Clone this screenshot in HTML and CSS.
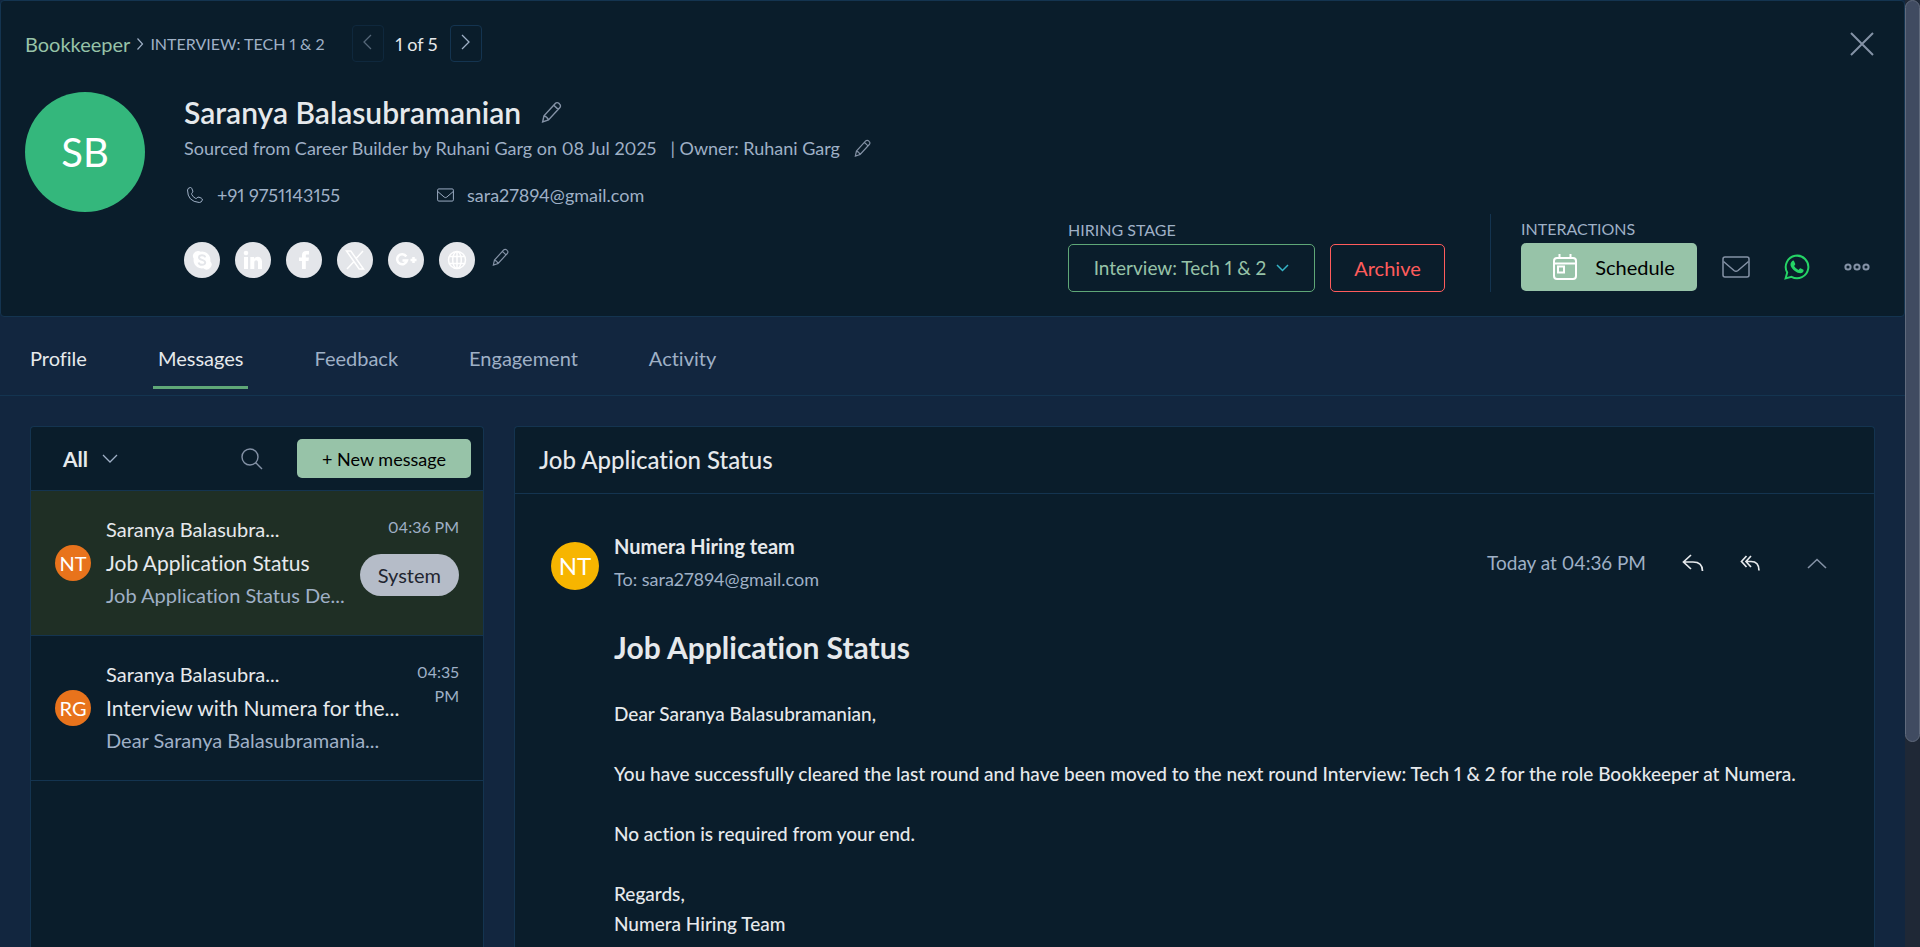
FILE: index.html
```html
<!DOCTYPE html>
<html lang="en">
<head>
    <meta charset="UTF-8">
    <meta name="viewport" content="width=device-width, initial-scale=1.0">
    <title>Saranya Balasubramanian - Messages</title>
    <link rel="stylesheet" href="styles.css">
</head>
<body>
    <!-- shared icons -->
    <svg class="sprite" aria-hidden="true">
        <symbol id="pencil" viewBox="0 0 20 20">
            <path d="M1.500 19l1.200-5.500L13 2.200a2.200 2.200 0 0 1 3.200-.1l.8.800a2.200 2.200 0 0 1 0 3.200L6.800 17.200zM11.600 3.800l4 3.800M2.700 13.500q2.800.6 4.100 3.700"/>
        </symbol>
        <symbol id="envelope" viewBox="0 0 28 22">
            <rect x="1" y="1" width="26" height="20" rx="2"/>
            <path d="M1.500 5.500L12 14.500q2 1.500 4 0L26.500 5.500"/>
        </symbol>
    </svg>

    <div class="page">
        <div class="content">
            <header class="candidate">
                <div class="topbar">
                    <nav class="breadcrumb">
                        <a href="#">Bookkeeper</a>
                        <svg class="icon" width="8" height="14" viewBox="0 0 8 14" stroke-width="1.200"><path d="M1.500 1.500L6.500 7l-5 5.500"/></svg>
                        <span class="caps">INTERVIEW: TECH 1 &amp; 2</span>
                    </nav>
                    <div class="pager">
                        <button class="pager-btn" disabled aria-label="Previous"><svg class="icon" width="9" height="16" viewBox="0 0 9 16" stroke-width="1.300"><path d="M8 1L1 8l7 7"/></svg></button>
                        <span>1 of 5</span>
                        <button class="pager-btn" aria-label="Next"><svg class="icon" width="9" height="16" viewBox="0 0 9 16" stroke-width="1.300"><path d="M1 1l7 7-7 7"/></svg></button>
                    </div>
                    <button class="icon-btn close" aria-label="Close"><svg class="icon" width="24" height="24" viewBox="0 0 24 24" stroke-width="2"><path d="M1 1l22 22M23 1L1 23"/></svg></button>
                </div>

                <div class="candidate-row">
                    <div class="avatar avatar-lg">SB</div>
                    <div class="candidate-info">
                        <div class="name-row">
                            <h1>Saranya Balasubramanian</h1>
                            <button class="icon-btn" aria-label="Edit name"><svg class="icon" width="22" height="22" stroke-width="1.300"><use href="#pencil"/></svg></button>
                        </div>
                        <div class="source-row">
                            <span>Sourced from Career Builder by Ruhani Garg on 08 Jul 2025</span>
                            <span class="owner">| Owner: Ruhani Garg</span>
                            <button class="icon-btn" aria-label="Edit owner"><svg class="icon" width="18" height="18" stroke-width="1.300"><use href="#pencil"/></svg></button>
                        </div>
                        <div class="contact-row">
                            <span class="phone"><svg class="icon" width="18" height="18" viewBox="0 0 18 18"><path d="M1.500 4Q2 1.500 4.500 1.500q1 0 1.400 1.200L6.800 5q.3 1-.6 1.800-1 .8-.4 1.800 1.200 2.400 3.600 3.700 1 .5 1.700-.5.800-1 1.900-.6l2.400 1q1.300.6.900 1.900-.7 2.400-3 2.400Q1.500 15.500 1.500 4z"/></svg>+91 9751143155</span>
                            <span class="email"><svg class="icon" width="17" height="14" stroke-width="1.600"><use href="#envelope"/></svg>sara27894@gmail.com</span>
                        </div>
                        <div class="social-row">
                            <a class="social" href="#" aria-label="Skype"><svg width="20" height="20" viewBox="0 0 20 20"><path fill="#fff" d="M5.800 1a4.800 4.800 0 0 1 3 .7A8.300 8.300 0 0 1 18.300 11.200 5 5 0 0 1 11.300 18.300 8.300 8.300 0 0 1 1.700 8.700 5 5 0 0 1 5.800 1z"/><path class="skype-s" d="M13.200 7.400C12.700 4.400 7 4.500 7 7.500c0 3 6.200 1.800 6.200 5 0 3.200-6 3-6.600 0"/></svg></a>
                            <a class="social" href="#" aria-label="LinkedIn"><svg width="20" height="20" viewBox="0 0 20 20" fill="#fff"><circle cx="3" cy="3" r="2.300"/><path d="M1 7h4v12H1zM7.300 7h3.900v1.700c2-3.200 7.800-2.600 7.800 2.800V19h-4v-6.500c0-3-3.700-2.800-3.700 0V19h-4z"/></svg></a>
                            <a class="social" href="#" aria-label="Facebook"><svg width="20" height="20" viewBox="0 0 20 20" fill="#fff"><path d="M8 19v-8H5V7.500h3V5.200C8 2.200 9.800 1 12 1h3v3.500h-1.800c-1 0-1.400.5-1.400 1.400v1.600H15l-.5 3.500h-2.700v8z"/></svg></a>
                            <a class="social" href="#" aria-label="X"><svg width="20" height="20" viewBox="0 0 20 20" fill="none" stroke="#fff" stroke-width="1.500"><path d="M1.500 1h4.300l12.700 18h-4.300zM18 1l-7.300 8M9 11.500L2 19"/></svg></a>
                            <a class="social" href="#" aria-label="Google Plus"><svg width="22" height="20" viewBox="0 0 22 20" fill="none" stroke="#fff" stroke-width="2.500"><path d="M11.300 6.500A5 5 0 1 0 12 10.500H7.500M18.500 7v6M15.500 10h6"/></svg></a>
                            <a class="social" href="#" aria-label="Website"><svg width="20" height="20" viewBox="0 0 20 20" fill="none" stroke="#fff" stroke-width="1.500"><circle cx="10" cy="10" r="8.500"/><ellipse cx="10" cy="10" rx="4.300" ry="8.500"/><path d="M10 1.500v17M2.500 6.500h15M2.500 13.500h15"/></svg></a>
                            <button class="icon-btn" aria-label="Edit links"><svg class="icon" width="18" height="18" stroke-width="1.300"><use href="#pencil"/></svg></button>
                        </div>
                    </div>

                    <div class="actions">
                        <div class="stage">
                            <div class="caps">HIRING STAGE</div>
                            <div class="stage-buttons">
                                <button class="btn btn-stage">Interview: Tech 1 &amp; 2
                                    <svg class="icon" width="13" height="8" viewBox="0 0 13 8" stroke-width="1.500"><path d="M1 1l5.500 5.500L12 1"/></svg>
                                </button>
                                <button class="btn btn-archive">Archive</button>
                            </div>
                        </div>
                        <div class="interactions">
                            <div class="caps">INTERACTIONS</div>
                            <div class="interaction-buttons">
                                <button class="btn btn-schedule">
                                    <svg width="24" height="26" viewBox="0 0 24 26" fill="none" stroke="#fff" stroke-width="2"><rect x="1" y="4" width="22" height="21" rx="3"/><path d="M1 9.500h22M6.500 0v4M17.500 0v4"/><rect x="5" y="12.500" width="6" height="6"/></svg>
                                    Schedule
                                </button>
                                <button class="icon-btn" aria-label="Email"><svg class="icon" width="28" height="22" stroke-width="1.500"><use href="#envelope"/></svg></button>
                                <button class="icon-btn" aria-label="WhatsApp"><svg width="26" height="26" viewBox="0 0 26 26"><path fill="none" stroke="#25d366" stroke-width="2" d="M1.600 24.400l1.600-5.900a11.300 11.300 0 1 1 4.300 4.300z"/><path fill="#25d366" d="M8 7.200q.8-.9 1.900-.4l1.400 3.100q.2.600-1.200 2 1.500 2.900 4.400 4 1.400-1.900 2-1.600l3 1.400q.5 1-.6 2.600c-2 1.900-4.800 1.100-8-1.200-3.600-2.700-6.200-7-2.900-9.900z"/></svg></button>
                                <button class="icon-btn" aria-label="More"><svg class="icon" width="26" height="8" viewBox="0 0 26 8" stroke-width="2"><circle cx="4" cy="4" r="2.600"/><circle cx="13" cy="4" r="2.600"/><circle cx="22" cy="4" r="2.600"/></svg></button>
                            </div>
                        </div>
                    </div>
                </div>
            </header>

            <nav class="tabs">
                <a href="#" class="tab visited">Profile</a>
                <a href="#" class="tab active">Messages</a>
                <a href="#" class="tab">Feedback</a>
                <a href="#" class="tab">Engagement</a>
                <a href="#" class="tab">Activity</a>
            </nav>

            <main class="messages">
                <section class="panel inbox">
                    <div class="inbox-head">
                        <button class="filter">All
                            <svg class="icon" width="16" height="10" viewBox="0 0 16 10" stroke-width="1.300"><path d="M1 1l7 7 7-7"/></svg>
                        </button>
                        <button class="icon-btn search" aria-label="Search"><svg class="icon" width="22" height="22" viewBox="0 0 22 22" stroke-width="1.400"><circle cx="9" cy="9" r="8"/><path d="M14.800 14.800L21 21"/></svg></button>
                        <button class="btn btn-new">+ New message</button>
                    </div>
                    <article class="mail selected">
                        <div class="avatar avatar-sm">NT</div>
                        <div class="mail-text">
                            <div class="mail-from">Saranya Balasubra...</div>
                            <div class="mail-subject">Job Application Status</div>
                            <div class="mail-preview">Job Application Status De...</div>
                        </div>
                        <div class="mail-meta">
                            <time>04:36 PM</time>
                            <span class="tag">System</span>
                        </div>
                    </article>
                    <article class="mail">
                        <div class="avatar avatar-sm">RG</div>
                        <div class="mail-text">
                            <div class="mail-from">Saranya Balasubra...</div>
                            <div class="mail-subject">Interview with Numera for the...</div>
                            <div class="mail-preview">Dear Saranya Balasubramania...</div>
                        </div>
                        <div class="mail-meta">
                            <time>04:35<br>PM</time>
                        </div>
                    </article>
                </section>

                <section class="panel reader">
                    <h2 class="reader-title">Job Application Status</h2>
                    <div class="reader-head">
                        <div class="avatar avatar-md">NT</div>
                        <div class="sender">
                            <div class="sender-name">Numera Hiring team</div>
                            <div class="sender-to">To: sara27894@gmail.com</div>
                        </div>
                        <div class="reader-actions">
                            <time>Today at 04:36 PM</time>
                            <button class="icon-btn light" aria-label="Reply"><svg class="icon" width="22" height="18" viewBox="0 0 22 18" stroke-width="1.700"><path d="M9 1L1.500 8 9 15M2 8h9q9.500 0 9.500 9"/></svg></button>
                            <button class="icon-btn light" aria-label="Reply all"><svg class="icon" width="20" height="16" viewBox="0 0 20 16" stroke-width="1.700"><path d="M6.500 1L1.500 6.500l5 5.500M11 1L6 6.500l5 5.500M6.500 6.500H11q8 0 8 9"/></svg></button>
                            <button class="icon-btn" aria-label="Collapse"><svg class="icon" width="20" height="11" viewBox="0 0 20 11" stroke-width="1.600"><path d="M1 10l9-8.500L19 10"/></svg></button>
                        </div>
                    </div>
                    <div class="letter">
                        <h3>Job Application Status</h3>
                        <p>Dear Saranya Balasubramanian,</p>
                        <p>You have successfully cleared the last round and have been moved to the next round Interview: Tech 1 &amp; 2 for the role Bookkeeper at Numera.</p>
                        <p>No action is required from your end.</p>
                        <p>Regards,<br>Numera Hiring Team</p>
                    </div>
                </section>
            </main>
        </div>
        <div class="scrollbar"><div class="thumb"></div></div>
    </div>
</body>
</html>
```
FILE: styles.css
```css
* {
    box-sizing: border-box;
}
body {
    margin: 0;
    background: #12263f;
    color: #e6e9ec;
    font-family: Lato, "Liberation Sans", sans-serif;
    font-size: 18px;
    line-height: 24px;
    font-variant-ligatures: none;
    font-variant-numeric: proportional-nums;
}
h1, h2, h3, p {
    margin: 0;
    font-weight: 500;
}
a {
    text-decoration: none;
}
button {
    font: inherit;
    font-variant-ligatures: none;
    font-variant-numeric: proportional-nums;
    cursor: pointer;
}
.sprite {
    display: none;
}
.icon {
    fill: none;
    stroke: currentColor;
}
.icon-btn {
    display: flex;
    padding: 0;
    border: 0;
    background: none;
    color: #8492a6;
}
.light {
    color: #e6e9ec;
}
.page {
    display: flex;
    height: 100vh;
    overflow: hidden;
}
.content {
    flex: 1;
    display: flex;
    flex-direction: column;
    min-width: 0;
}
.scrollbar {
    width: 15px;
    background: #1f2836;
}
.thumb {
    height: 78.4%;
    background: #404b61;
    border: 1px solid #606a7c;
    border-radius: 8px;
}

/* Candidate header */
.candidate {
    padding: 24px;
    background: #0a1d2b;
    border: 1px solid #143450;
    border-radius: 4px;
}
.topbar {
    display: flex;
    align-items: center;
    height: 37px;
}
.breadcrumb {
    display: flex;
    align-items: center;
    gap: 6px;
    color: #9fb0c6;
}
.breadcrumb a {
    color: #97c3a8;
    font-size: 20px;
}
.caps {
    color: #9fb0c6;
    font-size: 16px;
    line-height: 20px;
}
.pager {
    display: flex;
    align-items: center;
    gap: 12px;
    margin-left: 27px;
}
.pager-btn {
    display: flex;
    align-items: center;
    justify-content: center;
    width: 32px;
    height: 37px;
    padding: 0 0 3px;
    border: 1px solid #143450;
    border-radius: 4px;
    background: none;
    color: #9fb0c6;
}
.pager-btn:disabled {
    opacity: 0.5;
}
.close {
    margin: 0 6px 0 auto;
}
.candidate-row {
    display: flex;
    padding-top: 30px;
}
.avatar {
    display: flex;
    align-items: center;
    justify-content: center;
    flex: none;
    border-radius: 50%;
    color: #fff;
}
.avatar-lg {
    width: 120px;
    height: 120px;
    background: #34b77c;
    font-size: 40px;
}
.avatar-md {
    width: 48px;
    height: 48px;
    background: #f7b500;
    font-size: 24px;
}
.avatar-sm {
    width: 36px;
    height: 36px;
    background: #e8731c;
    font-size: 20px;
}
.candidate-info {
    padding: 0 0 14px 39px;
    color: #9fb0c6;
}
.name-row {
    display: flex;
    align-items: center;
    gap: 20px;
    padding-top: 5px;
}
.name-row h1 {
    color: #e6e9ec;
    font-size: 30px;
    font-weight: 600;
    line-height: 30px;
}
.source-row {
    display: flex;
    align-items: center;
    padding-top: 9px;
}
.owner {
    padding: 0 14px 0 14px;
}
.contact-row {
    display: flex;
    padding-top: 23px;
}
.phone,
.email {
    display: flex;
    align-items: center;
    gap: 13px;
    padding-left: 2px;
}
.phone {
    width: 251px;
}
.social-row {
    display: flex;
    gap: 15px;
    padding-top: 35px;
}
.social {
    display: flex;
    align-items: center;
    justify-content: center;
    width: 36px;
    height: 36px;
    border-radius: 50%;
    background: #e4e6ea;
}
.skype-s {
    fill: none;
    stroke: #e4e6ea;
    stroke-width: 2;
}
.social-row .icon-btn {
    padding: 6px 0 0 2px;
}
.actions {
    display: flex;
    align-items: flex-end;
    margin-left: auto;
}
.stage {
    padding-right: 45px;
}
.stage-buttons {
    display: flex;
    gap: 15px;
    padding-top: 4px;
}
.btn {
    display: flex;
    align-items: center;
    justify-content: center;
    height: 48px;
    border: 1px solid transparent;
    border-radius: 5px;
    background: none;
    font-size: 20px;
}
.btn-stage {
    gap: 10px;
    width: 247px;
    border-color: #5fa777;
    color: #97c3a8;
    font-size: 19px;
}
.btn-stage .icon {
    color: #35b5c8;
}
.btn-archive {
    width: 115px;
    border-color: #ff5c5c;
    color: #ff5c5c;
}
.interactions {
    padding: 5px 10px 1px 30px;
    border-left: 1px solid #143450;
}
.interaction-buttons {
    display: flex;
    align-items: center;
    padding-top: 4px;
}
.interaction-buttons .icon-btn {
    margin-left: 34px;
}
.interaction-buttons .btn + .icon-btn {
    margin-left: 25px;
}
.btn-schedule {
    gap: 18px;
    width: 176px;
    padding: 0 0 0 10px;
    background: #97c3a8;
    color: #000;
}

/* Tabs */
.tabs {
    display: flex;
    gap: 61px;
    padding: 21px 25px 6px;
    border-bottom: 1px solid #143450;
}
.tab {
    padding: 8px 5px 16px;
    border-bottom: 3px solid transparent;
    color: #9fb0c6;
    font-size: 20px;
}
.tab.visited,
.tab.active {
    color: #e6e9ec;
}
.tab.active {
    border-color: #5fa777;
}

/* Messages */
.messages {
    flex: 1;
    display: grid;
    grid-template-columns: 454px 1fr;
    gap: 30px;
    padding: 30px 30px 0;
}
.panel {
    background: #0a1d2b;
    border: 1px solid #143450;
    border-bottom: 0;
    border-radius: 4px 4px 0 0;
}
.inbox-head {
    display: flex;
    align-items: center;
    height: 64px;
    padding: 0 12px 0 32px;
    border-bottom: 1px solid #143450;
}
.filter {
    display: flex;
    align-items: center;
    gap: 14px;
    padding: 0;
    border: 0;
    background: none;
    color: #e6e9ec;
    font-size: 21px;
    font-weight: 700;
}
.filter .icon {
    color: #9fb0c6;
}
.search {
    margin: 0 34px 0 auto;
}
.btn-new {
    width: 174px;
    height: 39px;
    background: #97c3a8;
    color: #000;
    font-size: 18px;
}
.mail {
    display: flex;
    height: 145px;
    padding: 22px 24px;
    border-bottom: 1px solid #143450;
}
.mail.selected {
    background: #1f2f25;
}
.mail .avatar {
    margin: 32px 15px 0 0;
}
.mail-text {
    white-space: nowrap;
    font-size: 20px;
    line-height: 33px;
}
.mail-subject {
    font-size: 21px;
}
.mail-preview {
    color: #9fb0c6;
}
.mail-meta {
    margin-left: auto;
    text-align: right;
    color: #9fb0c6;
}
.mail-meta time {
    display: block;
    padding-top: 2px;
    font-size: 16px;
    white-space: nowrap;
}
.tag {
    display: block;
    margin-top: 15px;
    padding: 9px 18px;
    border-radius: 21px;
    background: #b5bcc8;
    color: #1f2530;
    font-size: 20px;
}
.reader-title {
    height: 67px;
    padding: 0 24px;
    border-bottom: 1px solid #143450;
    font-size: 24px;
    line-height: 66px;
}
.reader-head {
    display: flex;
    padding: 36px 47px 0 36px;
}
.reader-head .avatar {
    margin-top: 12px;
}
.sender {
    padding-left: 15px;
    line-height: 33px;
}
.sender-name {
    font-size: 20px;
    font-weight: 700;
}
.sender-to {
    color: #9fb0c6;
    font-size: 18px;
}
.reader-actions {
    display: flex;
    align-items: center;
    margin-left: auto;
    color: #9fb0c6;
}
.reader-actions time {
    font-size: 19px;
}
.reader-actions .icon-btn {
    margin-left: 36px;
}
.reader-actions .icon-btn:last-child {
    margin-left: 47px;
}
.letter {
    padding: 31px 47px 0 99px;
    font-size: 19px;
    line-height: 30px;
}
.letter h3 {
    font-size: 30px;
    font-weight: 700;
    line-height: 40px;
}
.letter p {
    padding-top: 30px;
}
.letter h3 + p {
    padding-top: 32px;
}
```
